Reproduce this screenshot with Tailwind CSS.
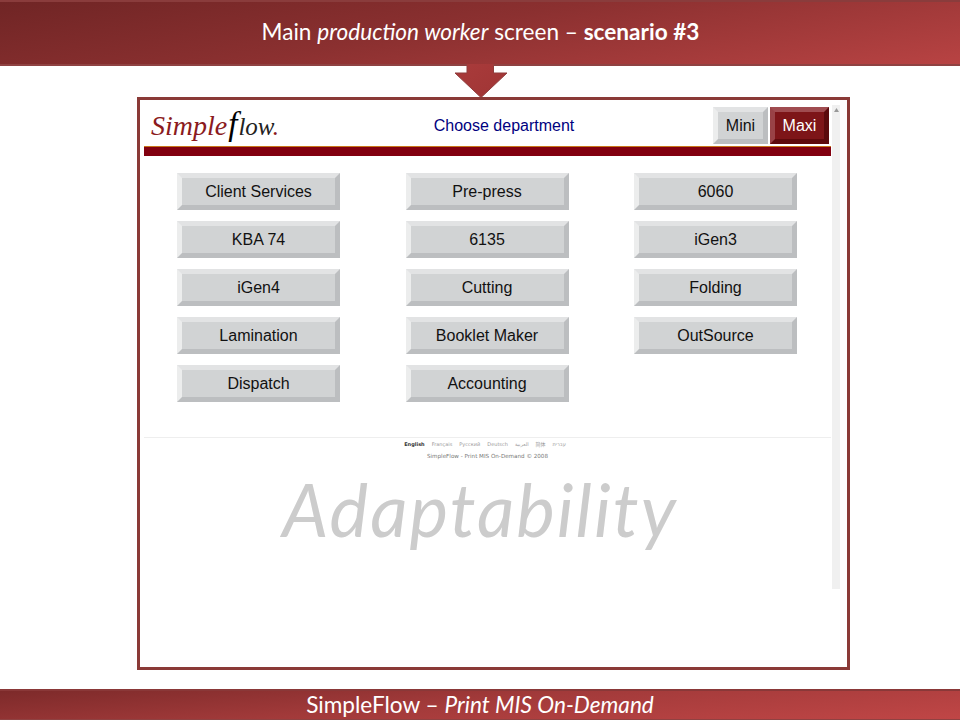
<!DOCTYPE html>
<html lang="en">

<head>
  <meta charset="UTF-8" />
  <title>Main production worker screen</title>
  <script src="https://cdn.jsdelivr.net/npm/@tailwindcss/browser@4"></script>
</head>

<body class="relative w-[960px] h-[720px] overflow-hidden bg-white flex flex-col font-['Lato',sans-serif]">

  <!-- Title banner -->
  <header class="h-[66px] shrink-0 flex items-center justify-center pb-[2px] pl-[1px] text-white text-[22.600px] border-t-2 border-b-2 border-t-[#8a3c3c] border-b-[#8f4242] bg-[linear-gradient(170deg,#702525_0%,#8b3030_45%,#b84343_100%)]">
    <h1 class="font-normal">Main <i>production worker</i> screen &ndash; <b>scenario #3</b></h1>
  </header>

  <!-- Arrow from banner to frame -->
  <svg class="absolute left-[455px] top-[64px]" width="53" height="34" viewBox="0 0 53 34">
    <defs>
      <linearGradient id="arrowFill" x1="0" y1="0" x2="1" y2="1">
        <stop offset="0" stop-color="#a93b3b" />
        <stop offset="1" stop-color="#a03535" />
      </linearGradient>
    </defs>
    <path d="M12 0V9H0L26 33.500L52 9H38.500V0Z" fill="url(#arrowFill)" />
    <path d="M12 2V9H0L26 33.500L52 9H38.500V2" fill="none" stroke="#8f3c3c" stroke-width="1" />
  </svg>

  <main class="flex-1 relative">
    <!-- Screenshot frame -->
    <div class="relative ml-[137px] mt-[31px] w-[713px] h-[573px] border-[3px] border-[#8a3a37] bg-white flex pl-[4px]">
      <div class="w-[687px] shrink-0 flex flex-col font-['Liberation_Sans',sans-serif]">
        <div class="h-[46px] shrink-0 flex">
          <div class="w-[215px] pl-[7px] pt-[10px] font-['Liberation_Serif',serif] italic text-[28px] leading-[28px] text-[#8b1a20]">
            <div class="whitespace-nowrap">Simple<span class="text-black text-[33px] mx-[1px]">f</span><span class="text-[#222] text-[25px]">low</span><span class="text-[25px]">.</span></div>
          </div>
          <div class="w-[290px] pt-[16px] text-[16px] leading-[20px] text-[#000080] text-center">Choose department</div>
          <div class="ml-auto flex gap-[2px] pt-[7px] pr-[2px]">
            <div class="w-[55px] h-[37px] flex items-center justify-center border-[5px] text-[16px] text-[#111] bg-[#d1d3d4] border-t-[#e2e3e4] border-l-[#eceded] border-r-[#bcbec0] border-b-[#bcbec0]">Mini</div>
            <div class="w-[59px] h-[37px] flex items-center justify-center border-[5px] text-[16px] text-white bg-[#7d1518] border-t-[#a04c50] border-l-[#994246] border-r-[#5a0a0c] border-b-[#5e0a0c]">Maxi</div>
          </div>
        </div>

        <div class="h-[10px] shrink-0 bg-[#820010] border-t border-t-[#c8761a]"></div>

        <!-- Department buttons -->
        <div class="mt-[17px] ml-[33px] grid grid-cols-[163px_163px_163px] gap-x-[65.500px] gap-y-[11px] auto-rows-[37px] text-[16px] text-[#111]">
          <div class="flex items-center justify-center border-[5px] bg-[#d1d3d4] border-t-[#e2e3e4] border-l-[#eceded] border-r-[#bcbec0] border-b-[#bcbec0]">Client Services</div>
          <div class="flex items-center justify-center border-[5px] bg-[#d1d3d4] border-t-[#e2e3e4] border-l-[#eceded] border-r-[#bcbec0] border-b-[#bcbec0]">Pre-press</div>
          <div class="flex items-center justify-center border-[5px] bg-[#d1d3d4] border-t-[#e2e3e4] border-l-[#eceded] border-r-[#bcbec0] border-b-[#bcbec0]">6060</div>
          <div class="flex items-center justify-center border-[5px] bg-[#d1d3d4] border-t-[#e2e3e4] border-l-[#eceded] border-r-[#bcbec0] border-b-[#bcbec0]">KBA 74</div>
          <div class="flex items-center justify-center border-[5px] bg-[#d1d3d4] border-t-[#e2e3e4] border-l-[#eceded] border-r-[#bcbec0] border-b-[#bcbec0]">6135</div>
          <div class="flex items-center justify-center border-[5px] bg-[#d1d3d4] border-t-[#e2e3e4] border-l-[#eceded] border-r-[#bcbec0] border-b-[#bcbec0]">iGen3</div>
          <div class="flex items-center justify-center border-[5px] bg-[#d1d3d4] border-t-[#e2e3e4] border-l-[#eceded] border-r-[#bcbec0] border-b-[#bcbec0]">iGen4</div>
          <div class="flex items-center justify-center border-[5px] bg-[#d1d3d4] border-t-[#e2e3e4] border-l-[#eceded] border-r-[#bcbec0] border-b-[#bcbec0]">Cutting</div>
          <div class="flex items-center justify-center border-[5px] bg-[#d1d3d4] border-t-[#e2e3e4] border-l-[#eceded] border-r-[#bcbec0] border-b-[#bcbec0]">Folding</div>
          <div class="flex items-center justify-center border-[5px] bg-[#d1d3d4] border-t-[#e2e3e4] border-l-[#eceded] border-r-[#bcbec0] border-b-[#bcbec0]">Lamination</div>
          <div class="flex items-center justify-center border-[5px] bg-[#d1d3d4] border-t-[#e2e3e4] border-l-[#eceded] border-r-[#bcbec0] border-b-[#bcbec0]">Booklet Maker</div>
          <div class="flex items-center justify-center border-[5px] bg-[#d1d3d4] border-t-[#e2e3e4] border-l-[#eceded] border-r-[#bcbec0] border-b-[#bcbec0]">OutSource</div>
          <div class="flex items-center justify-center border-[5px] bg-[#d1d3d4] border-t-[#e2e3e4] border-l-[#eceded] border-r-[#bcbec0] border-b-[#bcbec0]">Dispatch</div>
          <div class="flex items-center justify-center border-[5px] bg-[#d1d3d4] border-t-[#e2e3e4] border-l-[#eceded] border-r-[#bcbec0] border-b-[#bcbec0]">Accounting</div>
        </div>

        <!-- Small footer of the app -->
        <div class="mt-[35px] border-t border-t-[#eeeeee] pt-[3px] text-center text-[5.600px] leading-[7px] text-[#999999] font-['DejaVu_Sans','Noto_Sans_CJK_SC',sans-serif]">
          <div class="flex justify-center gap-[7px] pr-[5px] text-[5px]">
            <span class="font-bold text-[#333333]">English</span><span>Français</span><span>Русский</span><span>Deutsch</span><span>العربية</span><span>简体</span><span>עברית</span>
          </div>
          <div class="mt-[5px] text-[#777777]">SimpleFlow - Print MIS On-Demand © 2008</div>
        </div>
      </div>

      <!-- Scrollbar -->
      <div class="w-[8px] h-[484px] ml-[1px] mt-[5px] bg-[#f0f0f0] flex justify-center pt-[3px]">
        <svg width="5" height="4" viewBox="0 0 5 4"><path d="M2.500 0L5 4H0Z" fill="#999999" /></svg>
      </div>
    </div>

    <!-- Watermark over the frame -->
    <div class="absolute left-0 top-[403px] w-full text-center italic text-[73px] leading-[80px] text-[#cccccc] tracking-[2px]">Adaptability</div>
  </main>

  <!-- Bottom banner -->
  <footer class="h-[31px] shrink-0 flex items-center justify-center text-white text-[22.600px] border-t-2 border-t-[#8a3838] border-b border-b-[#8f4242] bg-[linear-gradient(175deg,#7d2a2a_0%,#a23a3a_45%,#c04646_100%)]">
    <p>SimpleFlow &ndash; <i>Print MIS On-Demand</i></p>
  </footer>

</body>

</html>
